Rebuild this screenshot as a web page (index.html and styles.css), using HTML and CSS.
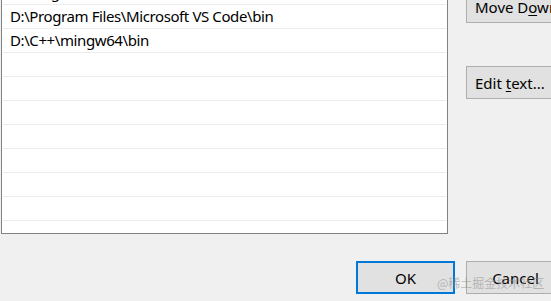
FILE: index.html
```html
<!DOCTYPE html>
<html lang="en">
<head>
    <meta charset="UTF-8">
    <title>Edit environment variable</title>
    <link rel="stylesheet" href="styles.css">
</head>
<body>

<div class="dialog">
    <div class="main">
        <div class="path-list">
            <div class="path-row">C:\Program Files\Git\cmd</div>
            <div class="path-row">D:\Program Files\Microsoft VS Code\bin</div>
            <div class="path-row">D:\C++\mingw64\bin</div>
            <div class="path-row"></div>
            <div class="path-row"></div>
            <div class="path-row"></div>
            <div class="path-row"></div>
            <div class="path-row"></div>
            <div class="path-row"></div>
            <div class="path-row"></div>
            <div class="path-row"></div>
        </div>
        <div class="side-buttons">
            <button class="btn">Move D<u>o</u>wn</button>
            <button class="btn edit-btn">Edit <u>t</u>ext...</button>
        </div>
    </div>
    <div class="footer">
        <button class="btn default-btn">OK</button>
        <button class="btn">Cancel</button>
    </div>
</div>

<div class="watermark">@稀土掘金技术社区</div>

</body>
</html>
```

FILE: styles.css
```css
html, body {
    margin: 0;
    padding: 0;
    width: 100%;
    height: 100%;
    background-color: #f0f0f0;
    font-family: "Noto Sans", "Liberation Sans", sans-serif;
    font-size: 15px;
    color: #000;
    overflow: hidden;
}
.dialog {
    width: 576px;
    padding: 0 11px 0 1px;
    box-sizing: border-box;
}
.main {
    display: flex;
    align-items: flex-start;
}
.path-list {
    width: 448px;
    height: 254px;
    margin-top: -20px;
    padding: 0 1px;
    box-sizing: border-box;
    background-color: #fff;
    border: 1px solid #828282;
    overflow: hidden;
}
.path-row {
    height: 23px;
    line-height: 23px;
    padding-left: 7px;
    border-bottom: 1px solid #ececec;
    letter-spacing: -0.4px;
    white-space: nowrap;
}
.side-buttons {
    display: flex;
    flex-direction: column;
    margin-left: 18px;
    margin-top: -10px;
    gap: 43px;
}
.btn {
    width: 99px;
    height: 33px;
    padding: 0;
    box-sizing: border-box;
    font-family: inherit;
    font-size: 15px;
    color: #000;
    background-color: #e1e1e1;
    border: 1px solid #adadad;
    white-space: nowrap;
}
.btn u {
    text-underline-offset: 2px;
}
.side-buttons .btn {
    text-align: left;
    padding-left: 8px;
}
.footer {
    display: flex;
    justify-content: flex-end;
    gap: 11px;
    margin-top: 27px;
}
.default-btn {
    border: 2px solid #0078d7;
}
.watermark {
    position: absolute;
    left: 437px;
    top: 274px;
    font-family: "Noto Sans CJK SC", sans-serif;
    font-size: 12px;
    color: rgba(140, 140, 140, 0.55);
    white-space: nowrap;
}
```
